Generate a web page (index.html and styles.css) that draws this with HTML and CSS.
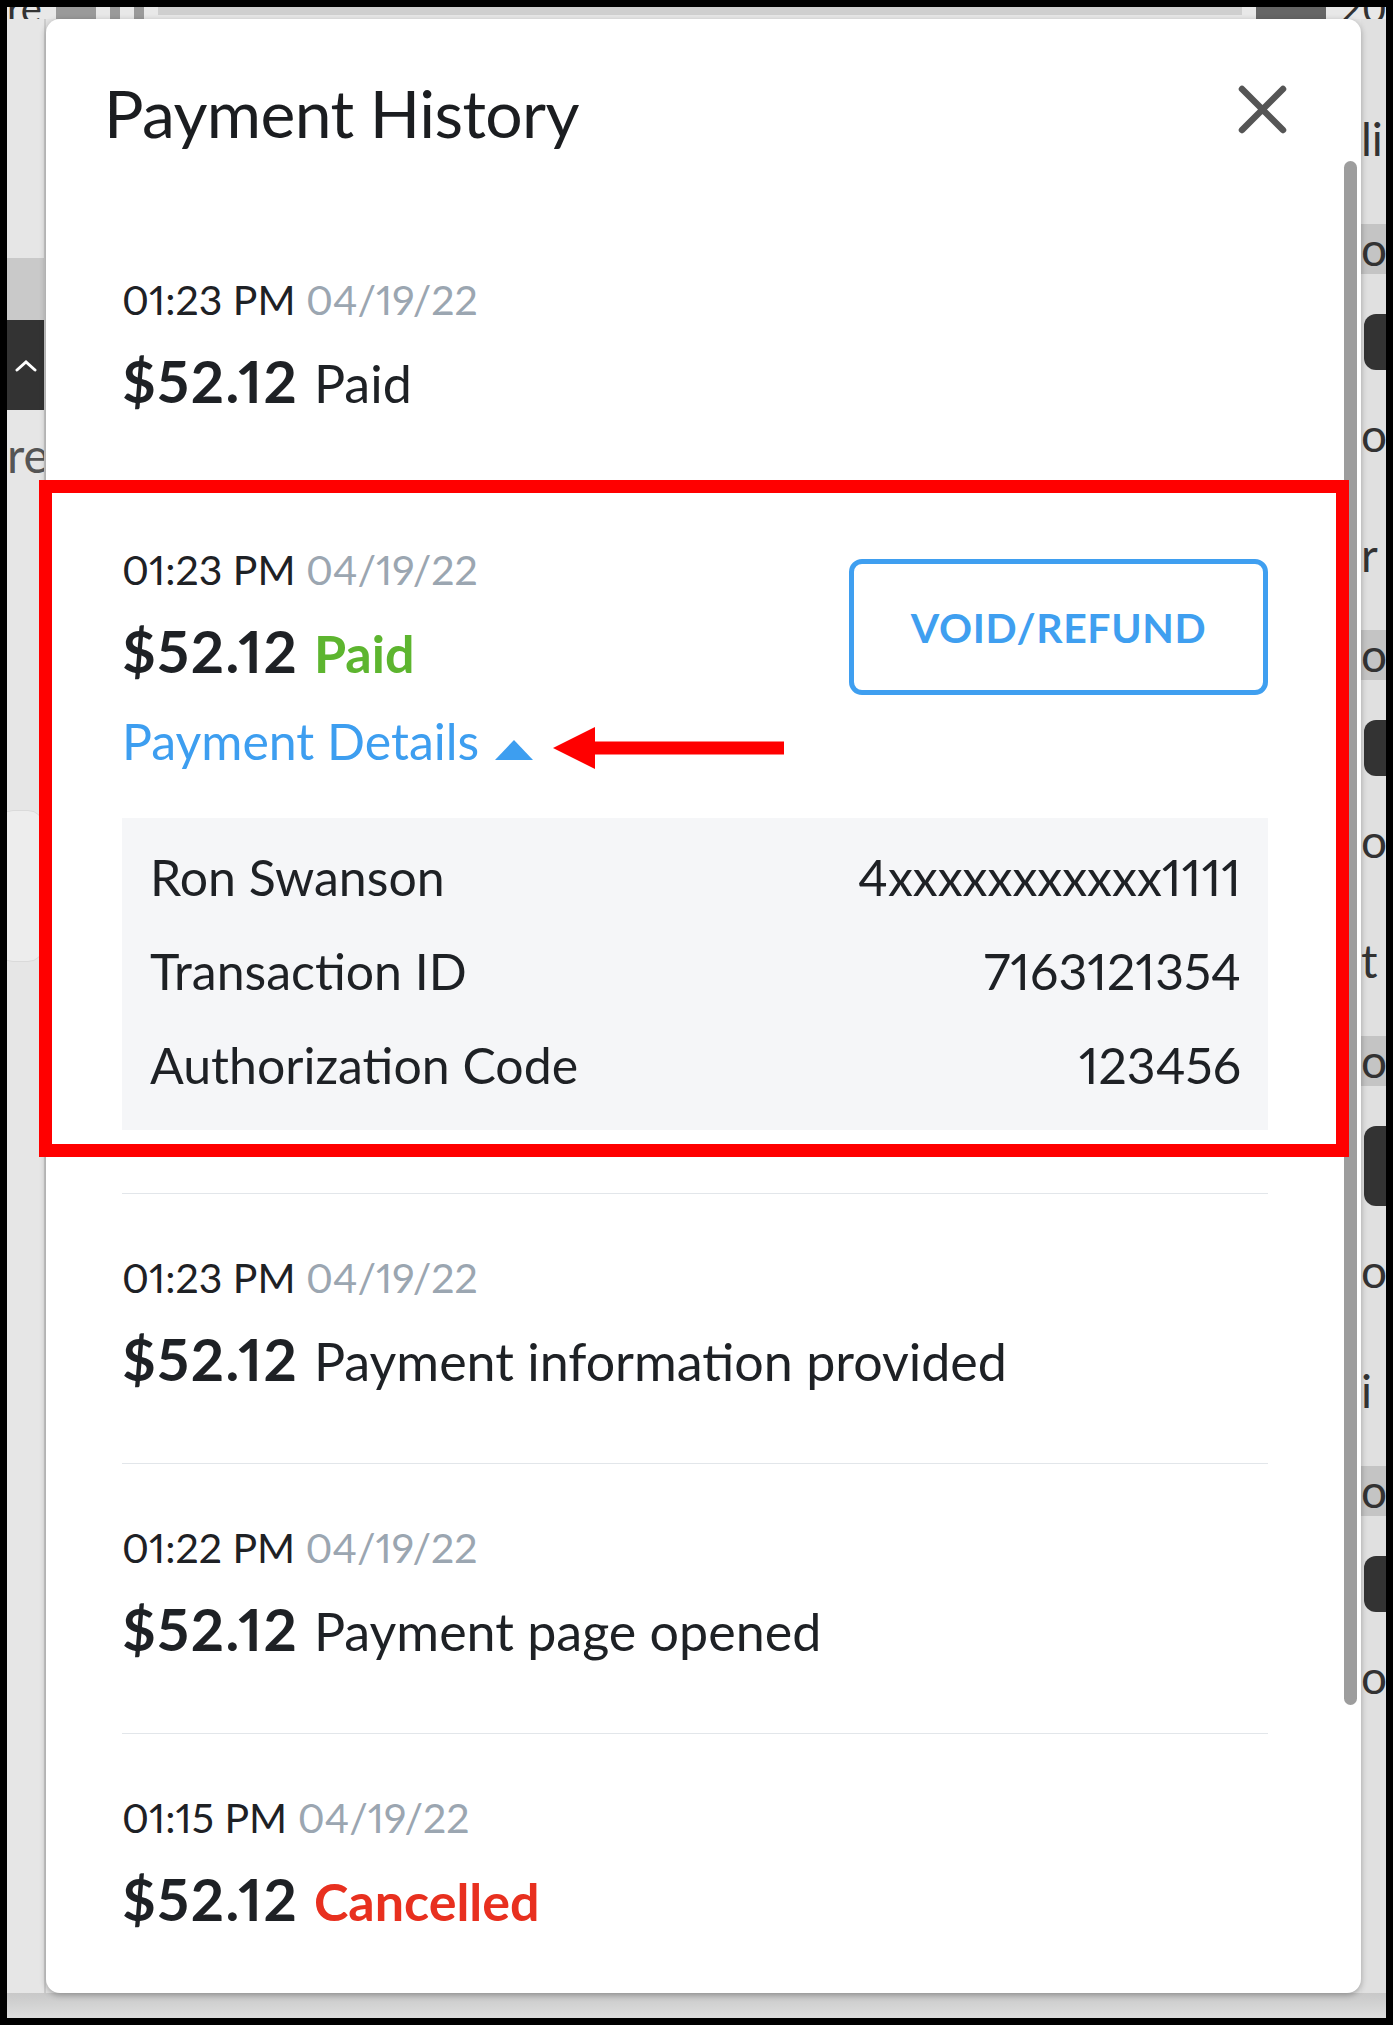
FILE: index.html
```html
<!DOCTYPE html>
<html>

<head>
    <meta charset="UTF-8">
    <link rel="stylesheet" href="styles.css">
</head>

<body>
    <div class="frame">
        <div class="bg-top">
            <span class="bg-glyph">re</span>
            <span class="bg-chip"></span>
            <span class="bg-chip small"></span>
            <span class="bg-chip small"></span>
            <span class="bg-fill"></span>
            <span class="bg-chip dark"></span>
            <span class="bg-glyph">20</span>
        </div>

        <div class="bg-row">
            <div class="bg-left">
                <div class="bg-band"></div>
                <div class="bg-dark">
                    <svg width="24" height="14" viewBox="0 0 24 14"><path d="M3 12 L12 4 L21 12" fill="none" stroke="#fff" stroke-width="3" stroke-linecap="round"/></svg>
                </div>
                <div class="bg-text">re</div>
                <div class="bg-card"></div>
            </div>

            <div class="modal">
                <div class="modal-head">
                    <h1>Payment History</h1>
                    <svg class="close" width="49" height="49" viewBox="0 0 49 49">
                        <path d="M4 4 L45 45 M45 4 L4 45" stroke="#555" stroke-width="6.5" stroke-linecap="round"/>
                    </svg>
                </div>

                <ul class="history">
                    <li class="entry">
                        <div class="time">01:23 PM <span class="date">04/19/22</span></div>
                        <div class="amount">$52.12 <span class="status">Paid</span></div>
                    </li>

                    <li class="entry open">
                        <div class="entry-head">
                            <div>
                                <div class="time">01:23 PM <span class="date">04/19/22</span></div>
                                <div class="amount">$52.12 <span class="status paid">Paid</span></div>
                            </div>
                            <button class="btn-void">VOID/REFUND</button>
                        </div>
                        <div class="details-toggle">Payment Details<span class="caret"></span></div>
                        <div class="details">
                            <div class="details-row"><span>Ron Swanson</span><span>4xxxxxxxxxxx1111</span></div>
                            <div class="details-row"><span>Transaction ID</span><span>7163121354</span></div>
                            <div class="details-row"><span>Authorization Code</span><span>123456</span></div>
                        </div>
                    </li>

                    <li class="entry">
                        <div class="time">01:23 PM <span class="date">04/19/22</span></div>
                        <div class="amount">$52.12 <span class="status">Payment information provided</span></div>
                    </li>

                    <li class="entry">
                        <div class="time">01:22 PM <span class="date">04/19/22</span></div>
                        <div class="amount">$52.12 <span class="status">Payment page opened</span></div>
                    </li>

                    <li class="entry">
                        <div class="time">01:15 PM <span class="date">04/19/22</span></div>
                        <div class="amount">$52.12 <span class="status cancelled">Cancelled</span></div>
                    </li>
                </ul>

                <div class="scrollbar"></div>
            </div>

            <div class="bg-right">
                <span class="r1">li</span>
                <span class="r2">o</span>
                <span class="pill"></span>
                <span class="r3">o</span>
                <span class="r4">r</span>
                <span class="r5">o</span>
                <span class="pill"></span>
                <span class="r3">o</span>
                <span class="r4">t</span>
                <span class="r5">o</span>
                <span class="pill tall"></span>
                <span class="r3">o</span>
                <span class="r4">i</span>
                <span class="r5">o</span>
                <span class="pill"></span>
                <span class="r3">o</span>
            </div>
        </div>

        <div class="bg-bottom"></div>

        <!-- annotation -->
        <div class="callout"></div>
        <svg class="arrow" width="232" height="44" viewBox="0 0 232 44">
            <path d="M0 22 L42 1 L42 15.5 L231 15.5 L231 28.5 L42 28.5 L42 43 Z" fill="#ff0000"/>
        </svg>
    </div>
</body>

</html>
```

FILE: styles.css
```css
body{
    margin: 0;
    background: #000;
    font-family: "Lato", "Open Sans", sans-serif;
}
.frame{
    position: relative;
    box-sizing: border-box;
    width: 1393px;
    height: 2025px;
    border: 7px solid #000;
    background: #e3e3e3;
    overflow: hidden;
    display: flex;
    flex-direction: column;
}

/* page behind the dialog */
.bg-top{
    height: 12px;
    flex: none;
    display: flex;
    align-items: flex-end;
    gap: 14px;
    background: #e8e8e8;
    overflow: hidden;
}
.bg-glyph{
    font-size: 40px;
    line-height: 22px;
    color: #333;
    margin-top: -10px;
}
.bg-chip{
    width: 40px;
    height: 12px;
    background: #9a9a9a;
}
.bg-chip.small{
    width: 10px;
}
.bg-chip.dark{
    width: 70px;
    background: #666;
}
.bg-fill{
    flex: 1;
    height: 8px;
    background: #cfcfcf;
    align-self: flex-start;
}
.bg-row{
    display: flex;
    height: 1974px;
    flex: none;
}
.bg-left{
    width: 37px;
    border-right: 2px solid #cdcdcd;
    background: #e6e6e6;
    overflow: hidden;
}
.bg-band{
    height: 62px;
    margin-top: 239px;
    background: #c9c9c9;
}
.bg-dark{
    height: 90px;
    background: #333;
    display: flex;
    align-items: center;
    justify-content: center;
}
.bg-text{
    margin-top: 20px;
    font-size: 48px;
    line-height: 50px;
    color: #555;
}
.bg-card{
    margin: 330px 0 0 -10px;
    height: 150px;
    border-radius: 16px;
    background: #ededed;
    border: 1px solid #dadada;
}
.bg-right{
    flex: 1;
    display: flex;
    flex-direction: column;
    align-items: flex-start;
    background: #e0e0e0;
    overflow: hidden;
    font-size: 46px;
    line-height: 50px;
    color: #333;
}
.bg-right .r1{ margin-top: 95px; }
.bg-right .r2{ margin-top: 60px; background: #c4c4c4; width: 25px; }
.bg-right .r3{ margin-top: 40px; }
.bg-right .r4{ margin-top: 70px; }
.bg-right .r5{ margin-top: 50px; background: #c4c4c4; width: 25px; }
.bg-right .pill{
    margin: 40px 0 0 3px;
    width: 40px;
    height: 56px;
    border-radius: 12px;
    background: #333;
}
.bg-right .pill.tall{
    height: 80px;
}
.bg-bottom{
    flex: 1;
    background: linear-gradient(#c8c8c8, #dedede);
}

/* dialog */
.modal{
    position: relative;
    width: 1315px;
    flex: none;
    background: #fff;
    border-radius: 14px;
    box-shadow: 0 2px 6px rgba(0, 0, 0, 0.3);
    overflow: hidden;
    color: #1e2125;
}
.modal-head{
    display: flex;
    justify-content: space-between;
    align-items: flex-start;
    padding: 60px 74px 0 58px;
}
.modal-head h1{
    margin: 0;
    font-size: 66px;
    line-height: 68px;
    font-weight: 400;
    letter-spacing: -0.6px;
    color: #1b1d20;
}
.close{
    margin-top: 6px;
}
.scrollbar{
    position: absolute;
    right: 4px;
    top: 142px;
    width: 13px;
    height: 1544px;
    border-radius: 7px;
    background: #9d9d9d;
}

.history{
    list-style: none;
    margin: 69px 93px 0 76px;
    padding: 0;
}
.entry{
    padding: 62px 0 75px;
    border-bottom: 1px solid #e2e6ea;
}
.entry.open{
    padding-bottom: 63px;
}
.time{
    font-size: 41px;
    line-height: 43px;
    font-variant-numeric: proportional-nums;
}
.date{
    color: #9ba6b1;
}
.amount{
    margin-top: 31px;
    height: 58px;
    font-size: 58px;
    line-height: 58px;
    font-weight: 700;
    letter-spacing: 1.5px;
    font-variant-numeric: proportional-nums;
}
.status{
    font-size: 52px;
    line-height: 1;
    font-weight: 400;
    letter-spacing: 0;
}
.status.paid{
    font-weight: 700;
    color: #5db52f;
}
.status.cancelled{
    font-weight: 700;
    color: #e8301f;
}

.entry-head{
    display: flex;
    justify-content: space-between;
    align-items: flex-start;
}
.btn-void{
    margin-top: 11px;
    width: 419px;
    height: 136px;
    border: 5px solid #3f9ff0;
    border-radius: 13px;
    background: #fff;
    color: #3f9ff0;
    font-family: "Lato", "Open Sans", sans-serif;
    font-size: 41px;
    font-weight: 700;
    letter-spacing: 0.6px;
    cursor: pointer;
}
.details-toggle{
    margin-top: 22px;
    font-size: 50px;
    line-height: 49px;
    color: #3d9ef0;
}
.caret{
    display: inline-block;
    margin-left: 16px;
    width: 0;
    height: 0;
    border-left: 19px solid transparent;
    border-right: 19px solid transparent;
    border-bottom: 20px solid #3d9ef0;
}
.details{
    margin-top: 52px;
    padding: 12px 27px 18px 28px;
    background: #f5f6f8;
}
.details-row{
    display: flex;
    justify-content: space-between;
    font-size: 50px;
    line-height: 94px;
    font-variant-numeric: proportional-nums;
}

/* red annotation */
.callout{
    position: absolute;
    left: 32px;
    top: 473px;
    width: 1310px;
    height: 677px;
    box-sizing: border-box;
    border: 13px solid #ff0000;
}
.arrow{
    position: absolute;
    left: 546px;
    top: 719px;
}
```
